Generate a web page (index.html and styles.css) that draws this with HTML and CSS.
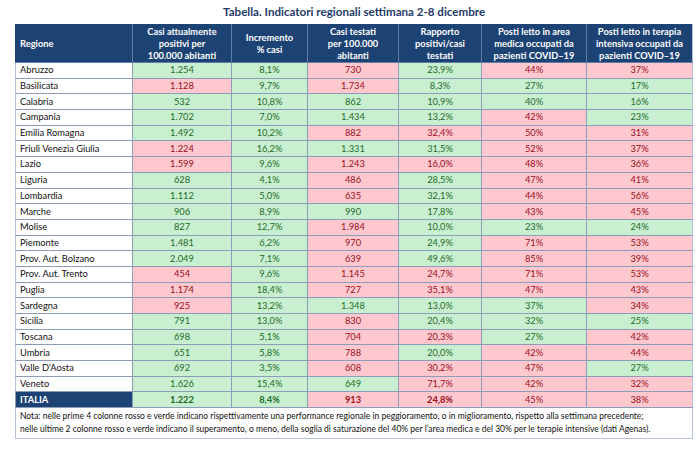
FILE: index.html
```html
<!DOCTYPE html>
<html lang="it">
<head>
<meta charset="utf-8">
<title>Tabella. Indicatori regionali settimana 2-8 dicembre</title>
<link rel="stylesheet" href="styles.css">
</head>
<body>
<main class="page">
  <h1 class="title">Tabella. Indicatori regionali settimana 2-8 dicembre</h1>
  <table class="grid">
    <colgroup>
      <col class="c-reg"><col class="c1"><col class="c2"><col class="c3"><col class="c4"><col class="c5"><col class="c6">
    </colgroup>
    <thead>
      <tr>
        <th class="h-reg">Regione</th>
        <th>Casi attualmente<br>positivi per<br>100.000 abitanti</th>
        <th>Incremento<br>% casi</th>
        <th>Casi testati<br>per 100.000<br>abitanti</th>
        <th>Rapporto<br>positivi/casi<br>testati</th>
        <th>Posti letto in area<br>medica occupati da<br>pazienti COVID–19</th>
        <th>Posti letto in terapia<br>intensiva occupati da<br>pazienti COVID–19</th>
      </tr>
    </thead>
    <tbody>
      <tr><td class="reg">Abruzzo</td><td class="g">1.254</td><td class="g">8,1%</td><td class="r">730</td><td class="g">23,9%</td><td class="r">44%</td><td class="r">37%</td></tr>
      <tr><td class="reg">Basilicata</td><td class="r">1.128</td><td class="g">9,7%</td><td class="r">1.734</td><td class="g">8,3%</td><td class="g">27%</td><td class="g">17%</td></tr>
      <tr><td class="reg">Calabria</td><td class="g">532</td><td class="g">10,8%</td><td class="g">862</td><td class="g">10,9%</td><td class="g">40%</td><td class="g">16%</td></tr>
      <tr><td class="reg">Campania</td><td class="g">1.702</td><td class="g">7,0%</td><td class="g">1.434</td><td class="g">13,2%</td><td class="r">42%</td><td class="g">23%</td></tr>
      <tr><td class="reg">Emilia Romagna</td><td class="g">1.492</td><td class="g">10,2%</td><td class="r">882</td><td class="r">32,4%</td><td class="r">50%</td><td class="r">31%</td></tr>
      <tr><td class="reg">Friuli Venezia Giulia</td><td class="r">1.224</td><td class="g">16,2%</td><td class="g">1.331</td><td class="g">31,5%</td><td class="r">52%</td><td class="r">37%</td></tr>
      <tr><td class="reg">Lazio</td><td class="r">1.599</td><td class="g">9,6%</td><td class="r">1.243</td><td class="r">16,0%</td><td class="r">48%</td><td class="r">36%</td></tr>
      <tr><td class="reg">Liguria</td><td class="g">628</td><td class="g">4,1%</td><td class="r">486</td><td class="g">28,5%</td><td class="r">47%</td><td class="r">41%</td></tr>
      <tr><td class="reg">Lombardia</td><td class="g">1.112</td><td class="g">5,0%</td><td class="r">635</td><td class="g">32,1%</td><td class="r">44%</td><td class="r">56%</td></tr>
      <tr><td class="reg">Marche</td><td class="g">906</td><td class="g">8,9%</td><td class="g">990</td><td class="g">17,8%</td><td class="r">43%</td><td class="r">45%</td></tr>
      <tr><td class="reg">Molise</td><td class="g">827</td><td class="g">12,7%</td><td class="r">1.984</td><td class="g">10,0%</td><td class="g">23%</td><td class="g">24%</td></tr>
      <tr><td class="reg">Piemonte</td><td class="g">1.481</td><td class="g">6,2%</td><td class="r">970</td><td class="g">24,9%</td><td class="r">71%</td><td class="r">53%</td></tr>
      <tr><td class="reg">Prov. Aut. Bolzano</td><td class="g">2.049</td><td class="g">7,1%</td><td class="r">639</td><td class="g">49,6%</td><td class="r">85%</td><td class="r">39%</td></tr>
      <tr><td class="reg">Prov. Aut. Trento</td><td class="r">454</td><td class="g">9,6%</td><td class="r">1.145</td><td class="r">24,7%</td><td class="r">71%</td><td class="r">53%</td></tr>
      <tr><td class="reg">Puglia</td><td class="r">1.174</td><td class="g">18,4%</td><td class="r">727</td><td class="r">35,1%</td><td class="r">47%</td><td class="r">43%</td></tr>
      <tr><td class="reg">Sardegna</td><td class="r">925</td><td class="g">13,2%</td><td class="g">1.348</td><td class="g">13,0%</td><td class="g">37%</td><td class="r">34%</td></tr>
      <tr><td class="reg">Sicilia</td><td class="g">791</td><td class="g">13,0%</td><td class="r">830</td><td class="g">20,4%</td><td class="g">32%</td><td class="g">25%</td></tr>
      <tr><td class="reg">Toscana</td><td class="g">698</td><td class="g">5,1%</td><td class="r">704</td><td class="r">20,3%</td><td class="g">27%</td><td class="r">42%</td></tr>
      <tr><td class="reg">Umbria</td><td class="g">651</td><td class="g">5,8%</td><td class="r">788</td><td class="g">20,0%</td><td class="r">42%</td><td class="r">44%</td></tr>
      <tr><td class="reg">Valle D'Aosta</td><td class="g">692</td><td class="g">3,5%</td><td class="r">608</td><td class="r">30,2%</td><td class="r">47%</td><td class="g">27%</td></tr>
      <tr><td class="reg">Veneto</td><td class="g">1.626</td><td class="g">15,4%</td><td class="g">649</td><td class="r">71,7%</td><td class="r">42%</td><td class="r">32%</td></tr>
      <tr class="total"><td class="reg-total">ITALIA</td><td class="g strong">1.222</td><td class="g strong">8,4%</td><td class="r strong">913</td><td class="r strong">24,8%</td><td class="r">45%</td><td class="r">38%</td></tr>
    </tbody>
    <tfoot>
      <tr>
        <td class="note" colspan="7">Nota: nelle prime 4 colonne rosso e verde indicano rispettivamente una performance regionale in peggioramento, o in miglioramento, rispetto alla settimana precedente;<br>nelle ultime 2 colonne rosso e verde indicano il superamento, o meno, della soglia di saturazione del 40% per l’area medica e del 30% per le terapie intensive (dati Agenas).</td>
      </tr>
    </tfoot>
  </table>
</main>
</body>
</html>
```
FILE: styles.css
```css
html, body {
  margin: 0;
  padding: 0;
  background: #ffffff;
}

.page {
  padding: 5px 8px 0 15px;
  font-family: Lato, "Open Sans", sans-serif;
  color: #111111;
}

.title {
  margin: 0 0 5px 0;
  padding-left: 208px;
  font-size: 11.6px;
  line-height: 14px;
  font-weight: 700;
  color: #1f3b67;
  white-space: nowrap;
}

.grid {
  border-collapse: collapse;
  table-layout: fixed;
  width: 677px;
  font-size: 9.3px;
}

.c-reg { width: 117px; }
.c1 { width: 99px; }
.c2 { width: 76px; }
.c3 { width: 91px; }
.c4 { width: 83px; }
.c5 { width: 105px; }
.c6 { width: 106px; }

.grid th {
  background: #1d4274;
  color: #ffffff;
  font-weight: 700;
  text-align: center;
  vertical-align: middle;
  height: 37px;
  padding: 0 2px;
  line-height: 12px;
  border: 1px solid #5e7ea8;
  border-top-color: #1d4274;
}

.grid th.h-reg {
  text-align: left;
  padding-left: 4px;
  border-left-color: #1d4274;
}

.grid td {
  height: 14.7px;
  padding: 0;
  line-height: 12px;
  text-align: center;
  border: 1px solid #8d9cb8;
}

.grid td.reg {
  text-align: left;
  padding-left: 4px;
  background: #ffffff;
  color: #111111;
  border-left-color: #b4c0d3;
}

.grid td.reg-total {
  text-align: left;
  padding-left: 4px;
  background: #1d4274;
  color: #ffffff;
  font-weight: 700;
}

.g {
  background: #c9efd1;
  color: #1d6b26;
}

.r {
  background: #ffc8cf;
  color: #9a0f1a;
}

.strong {
  font-weight: 700;
}

.grid td.note {
  text-align: left;
  padding: 2px 4px 3px 4px;
  height: auto;
  line-height: 12.5px;
  background: #ffffff;
  color: #111111;
  border: 1px solid #b4c0d3;
  font-size: 8.5px;
}

.grid td:last-child,
.grid th:last-child {
  border-right-color: #b4c0d3;
}
```
